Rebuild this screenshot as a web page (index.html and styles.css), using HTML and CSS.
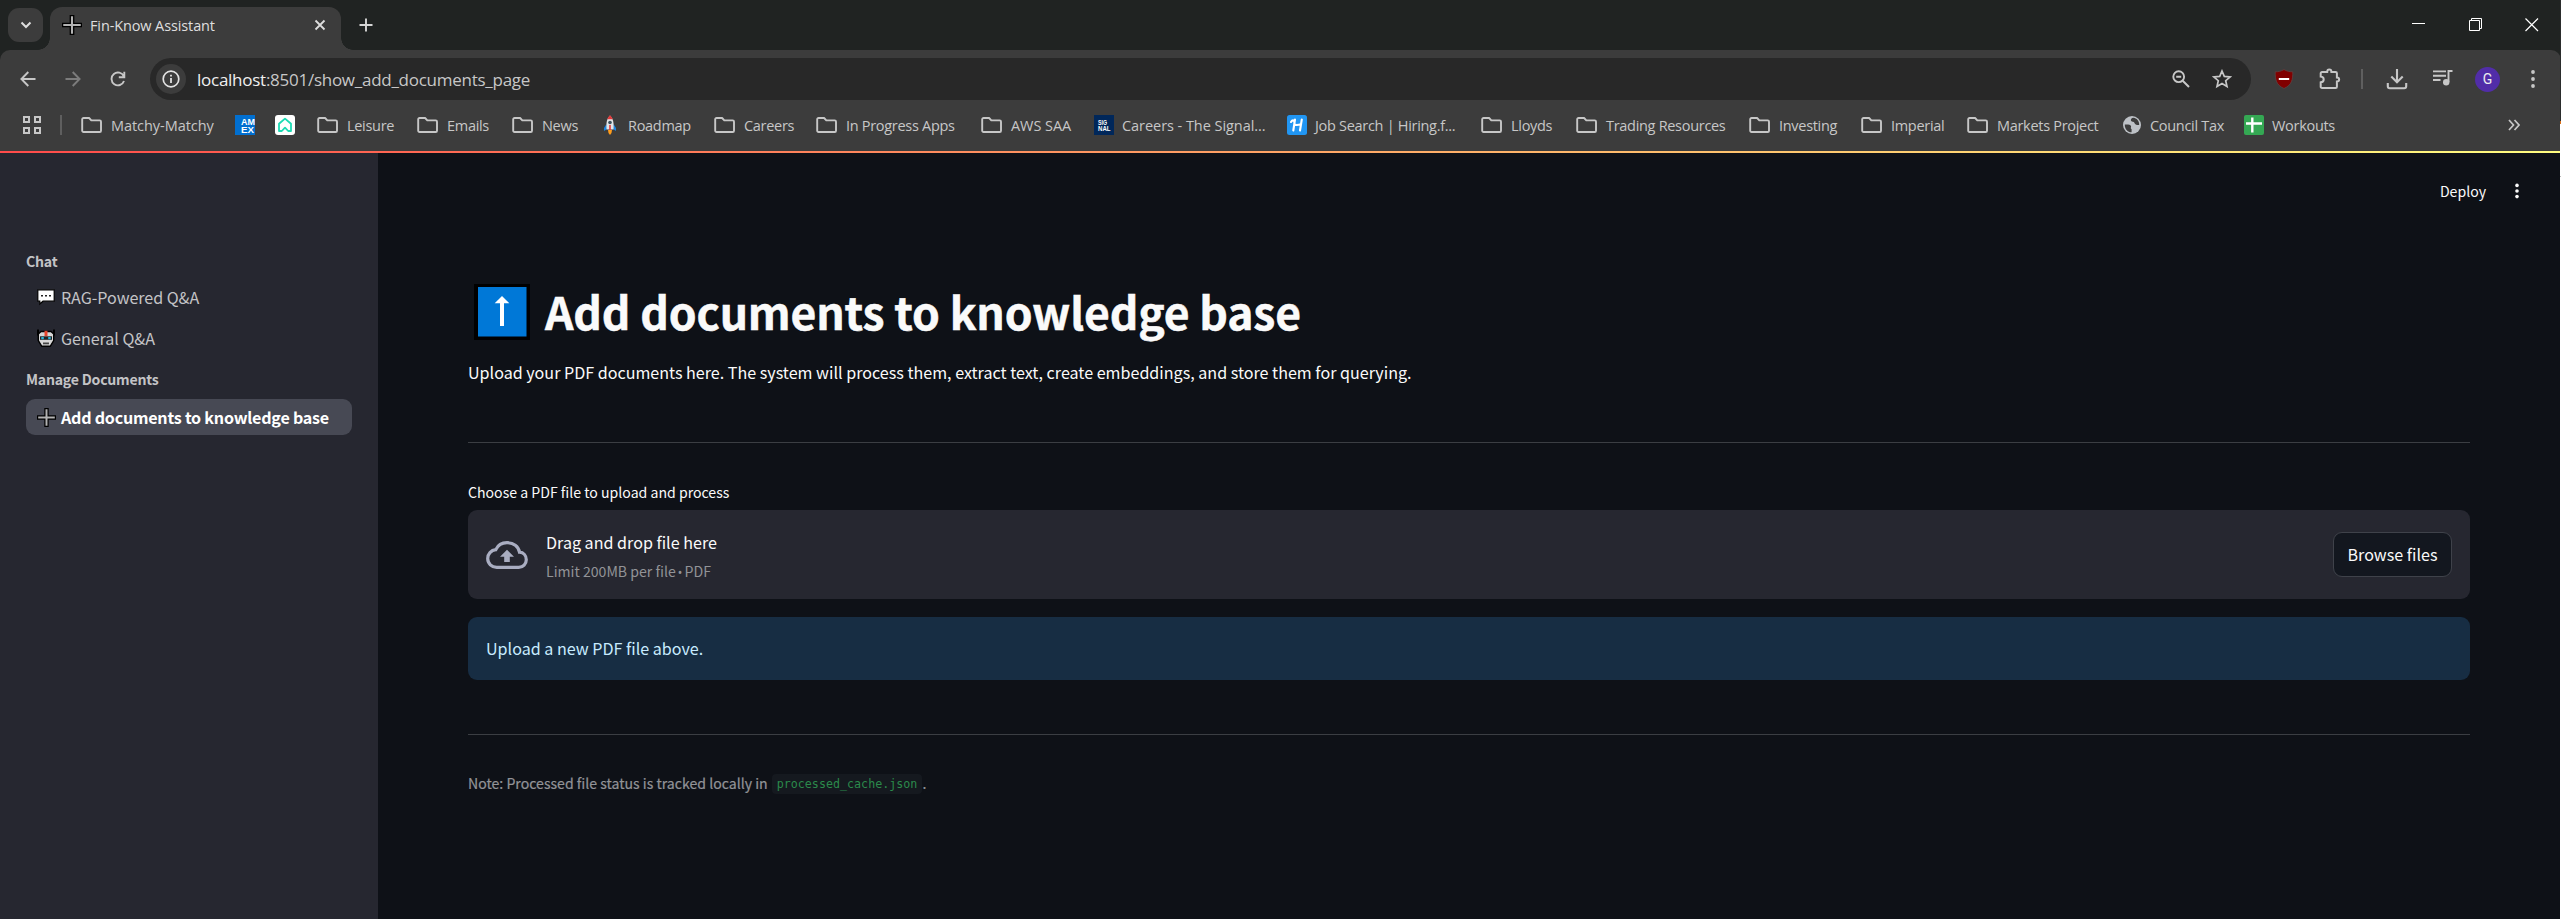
FILE: index.html
```html
<!DOCTYPE html>
<html lang="en">
<head>
<meta charset="utf-8">
<title>Fin-Know Assistant</title>
<link rel="stylesheet" href="styles.css">
</head>
<body>
<svg class="defs" width="0" height="0">
  <symbol id="folder" viewBox="0 0 22 18"><path d="M2.500 2h5.600l2.200 2.400h8.400a1.300 1.300 0 0 1 1.300 1.300v9a1.300 1.300 0 0 1-1.300 1.300H2.500a1.300 1.300 0 0 1-1.300-1.300V3.300A1.300 1.300 0 0 1 2.500 2z" fill="none" stroke="#c7c7c7" stroke-width="1.900" stroke-linejoin="round"/></symbol>
  <symbol id="plus" viewBox="0 0 20 20"><path d="M8.300 .6h3.400v7.700h7.700v3.400h-7.700v7.700H8.300v-7.700H.6V8.300h7.700z" fill="#b3b3b3" stroke="#000" stroke-width="1.300"/></symbol>
</svg>
<header class="browser">
  <div class="tabstrip">
    <button class="tab-search"><svg width="12" height="8" viewBox="0 0 12 8"><path d="M1.500 1.500 6 6l4.500-4.500" fill="none" stroke="#dedede" stroke-width="2"/></svg></button>
    <div class="tab">
      <svg class="favicon" width="20" height="20"><use href="#plus"/></svg>
      <span class="tab-title">Fin-Know Assistant</span>
      <svg class="tab-close" width="12" height="12" viewBox="0 0 12 12"><path d="m1.500 1.500 9 9m0-9-9 9" stroke="#dedede" stroke-width="1.800"/></svg>
    </div>
    <svg class="new-tab" width="14" height="14" viewBox="0 0 14 14"><path d="M7 .5v13M.5 7h13" stroke="#d6d6d6" stroke-width="1.900"/></svg>
    <div class="window-controls">
      <svg width="14" height="14" viewBox="0 0 14 14"><path d="M0 5.500h13" stroke="#fff"/></svg>
      <svg width="14" height="14" viewBox="0 0 14 14"><path d="M.5 2.500h10v10H.5zM2.500 2.500v-2h10v10h-2" fill="none" stroke="#fff"/></svg>
      <svg width="14" height="14" viewBox="0 0 14 14"><path d="m.5.5 12.500 12.500m0-12.500-12.500 12.500" stroke="#fff" stroke-width="1.200"/></svg>
    </div>
  </div>
  <div class="toolbar">
    <div class="nav">
      <svg width="16" height="16" viewBox="0 0 16 16"><path d="M15.500 8H1.500M8.300 1 1.400 8l6.900 7" fill="none" stroke="#c7c7c7" stroke-width="1.900"/></svg>
      <svg width="16" height="16" viewBox="0 0 16 16"><path d="M.5 8h14M7.700 1l6.900 7-6.900 7" fill="none" stroke="#7c7c7c" stroke-width="1.900"/></svg>
      <svg width="16" height="16" viewBox="0 0 16 16"><path d="M13.800 5.300A6.400 6.400 0 1 0 14 10M14.300.8v5.500H8.800" fill="none" stroke="#c7c7c7" stroke-width="1.900"/></svg>
    </div>
    <div class="omnibox">
      <span class="site-info"><svg width="18" height="18" viewBox="0 0 18 18"><circle cx="9" cy="9" r="7.800" fill="none" stroke="#e3e3e3" stroke-width="1.700"/><path d="M9 8v5M9 4.700v1.900" stroke="#e3e3e3" stroke-width="1.800"/></svg></span>
      <span class="url"><b>localhost</b>:8501/show_add_documents_page</span>
      <svg class="zoom-icon" width="18" height="18" viewBox="0 0 18 18"><circle cx="6.700" cy="6.700" r="5.400" fill="none" stroke="#c7c7c7" stroke-width="1.900"/><path d="M4.200 6.700h5M10.700 10.700l6.300 6.300" stroke="#c7c7c7" stroke-width="2"/></svg>
      <svg width="20" height="20" viewBox="0 0 20 20"><path d="m10 2 2.300 5.400 5.800.5-4.400 3.800 1.300 5.700-5-3-5 3 1.300-5.700-4.400-3.800 5.800-.5z" fill="none" stroke="#c7c7c7" stroke-width="1.700"/></svg>
    </div>
    <div class="tools">
      <svg class="shield" width="20" height="20" viewBox="0 0 20 20"><path d="M10 .5c3 1.800 5.500 2.300 8.800 2.300 0 8-.8 13-8.800 16.700C2 15.800 1.200 10.800 1.200 2.800 4.500 2.800 7 2.300 10 .5z" fill="#800000" stroke="#5c4444" stroke-width=".8"/><path d="M4.800 10h10.400" stroke="#fff" stroke-width="2"/></svg>
      <svg class="puzzle" width="22" height="22" viewBox="0 0 22 22"><path d="M3 4h5.200c0-3.200 4.200-3.200 4.200 0h4.200a1.300 1.300 0 0 1 1.300 1.300v4.200c3 0 3 4 0 4v5.200a1.300 1.300 0 0 1-1.300 1.300H3a1.300 1.300 0 0 1-1.300-1.300v-4.400c4-.5 4-5.300 0-5.800V5.300A1.300 1.300 0 0 1 3 4z" fill="none" stroke="#c7c7c7" stroke-width="2"/></svg>
      <i class="divider"></i>
      <svg class="download" width="22" height="22" viewBox="0 0 22 22"><path d="M11 1v12.500M5.300 8.500l5.700 5.700 5.700-5.700M1.800 15v3.200a2 2 0 0 0 2 2h14.400a2 2 0 0 0 2-2V15" fill="none" stroke="#c7c7c7" stroke-width="2.100"/></svg>
      <svg class="media" width="22" height="18" viewBox="0 0 22 18"><path d="M1 2.400h13M1 6.700h13M1 11h7.500M16.500 13V2h4" fill="none" stroke="#c7c7c7" stroke-width="1.900"/><circle cx="14.200" cy="13.200" r="3.200" fill="#c7c7c7"/></svg>
      <span class="avatar">G</span>
      <svg class="menu" width="6" height="20" viewBox="0 0 6 20"><g fill="#c7c7c7"><circle cx="3" cy="3" r="1.900"/><circle cx="3" cy="10" r="1.900"/><circle cx="3" cy="17" r="1.900"/></g></svg>
    </div>
  </div>
  <nav class="bookmarks">
    <svg class="apps" width="20" height="20" viewBox="0 0 20 20"><path d="M2 2h5v5H2zM13 2h5v5h-5zM2 13h5v5H2zM13 13h5v5h-5z" fill="none" stroke="#c7c7c7" stroke-width="2"/></svg>
    <i class="divider"></i>
    <a class="bm folder w154 wide"><svg><use href="#folder"/></svg><span>Matchy-Matchy</span></a>
    <a class="bm w40"><svg viewBox="0 0 20 20"><rect width="20" height="20" fill="#016fd0"/><g class="fav-text"><text x="6" y="9.500" font-size="8.500" textLength="14" lengthAdjust="spacingAndGlyphs">AM</text><text x="6" y="17.500" font-size="8.500" textLength="13" lengthAdjust="spacingAndGlyphs">EX</text></g></svg></a>
    <a class="bm w42"><svg viewBox="0 0 20 20"><rect width="20" height="20" rx="3" fill="#fff"/><path d="M4 16V8.800L10 3.600l6 5.200V16h-2.800L10 12.600 6.800 16z" fill="none" stroke="#1ddbb4" stroke-width="1.800" stroke-linejoin="round"/></svg></a>
    <a class="bm folder w100"><svg><use href="#folder"/></svg><span>Leisure</span></a>
    <a class="bm folder w95"><svg><use href="#folder"/></svg><span>Emails</span></a>
    <a class="bm folder w88"><svg><use href="#folder"/></svg><span>News</span></a>
    <a class="bm w114"><svg viewBox="0 0 20 20"><path d="M6.500 9 4 13v3l3-2zM13.500 9l2.500 4v3l-3-2z" fill="#1c86e0"/><path d="M10 .5C7 3.500 6 7 6.500 14.500h7C14 7 13 3.500 10 .5z" fill="#e2e5e8"/><path d="M10 .2C8.600 1.500 7.800 2.800 7.300 4.300h5.400C12.200 2.800 11.400 1.500 10 .2zM9.200 10h1.600v5H9.200z" fill="#e03a3a"/><circle cx="10" cy="7.500" r="1.800" fill="#3c5360"/><path d="M8 15h4l-.5 3L10 20l-1.500-2z" fill="#ff9d1c"/></svg><span>Roadmap</span></a>
    <a class="bm folder w102"><svg><use href="#folder"/></svg><span>Careers</span></a>
    <a class="bm folder w165"><svg><use href="#folder"/></svg><span>In Progress Apps</span></a>
    <a class="bm folder w113 wide"><svg><use href="#folder"/></svg><span>AWS SAA</span></a>
    <a class="bm w193 wide"><svg viewBox="0 0 20 20"><rect width="20" height="20" fill="#00275a"/><g class="fav-text"><text x="4" y="9.500" font-size="6.500" textLength="9" lengthAdjust="spacingAndGlyphs">SIG</text><text x="4" y="15.500" font-size="6.500" textLength="12.500" lengthAdjust="spacingAndGlyphs">NAL</text></g></svg><span>Careers - The Signal...</span></a>
    <a class="bm w194"><svg viewBox="0 0 20 20"><rect width="20" height="20" rx="2.500" fill="#2196f3"/><path d="M8 4.500 6.300 15.500M14.800 4.500 13 15.500M4 7c1.500-2.500 4-2.500 3.300 2.500 2 .8 4 .6 6.700-.3" fill="none" stroke="#fff" stroke-width="2.100" stroke-linecap="round"/></svg><span>Job Search | Hiring.f...</span></a>
    <a class="bm folder w95"><svg><use href="#folder"/></svg><span>Lloyds</span></a>
    <a class="bm folder w173"><svg><use href="#folder"/></svg><span>Trading Resources</span></a>
    <a class="bm folder w112"><svg><use href="#folder"/></svg><span>Investing</span></a>
    <a class="bm folder w106"><svg><use href="#folder"/></svg><span>Imperial</span></a>
    <a class="bm folder w155"><svg><use href="#folder"/></svg><span>Markets Project</span></a>
    <a class="bm w122"><svg viewBox="0 0 20 20"><circle cx="10" cy="10" r="9" fill="#bdc1c6"/><path d="M2.800 9.500c2.500 0 5-.3 6 1.200s-1 2.300.8 3.300v3.300c-4 0-7-3.300-6.800-7.800zM11.500 2.800c-2 0-3 1.500-2.500 3 .8 1.500 3 .5 3.500 2.200.5 1.800 2.800 2.300 4.700 2C17.500 6 14.500 3 11.500 2.800z" fill="#3c3c3c"/></svg><span>Council Tax</span></a>
    <a class="bm w122"><svg viewBox="0 0 20 20"><rect width="20" height="20" rx="2" fill="#34a853"/><path d="M8.300 2.500v15M2 8.500h16" stroke="#fff" stroke-width="2.400"/></svg><span>Workouts</span></a>
    <svg class="more" width="12" height="12" viewBox="0 0 12 12"><path d="m1 1 4.500 5L1 11M6.500 1 11 6l-4.500 5" fill="none" stroke="#c7c7c7" stroke-width="1.700"/></svg>
  </nav>
</header>
<div class="decoration"></div>
<div class="app">
  <aside class="sidebar">
    <h4>Chat</h4>
    <a class="link"><svg width="18" height="18" viewBox="0 0 18 18"><path d="M.8 1.800h16.400v11.400H6L2.800 16v-2.800h-2z" fill="#fff" stroke="#000" stroke-width="1.200"/><path d="M4 7h2v1.600H4zM8 7h2v1.600H8zM12 7h2v1.600h-2z" fill="#222"/></svg><span>RAG-Powered Q&amp;A</span></a>
    <a class="link second"><svg width="18" height="20" viewBox="0 0 18 20"><path d="M1 1.500v6M17 1.500v6" stroke="#000" stroke-width="2"/><path d="M1.300 6 4 3.500h10L16.700 6v6.500l-3.500 5.800H4.800l-3.500-5.800z" fill="#d6d6d6" stroke="#000" stroke-width="1.400"/><path d="M7.500 2.800h3V8h-3z" fill="#e8452c"/><path d="M3 8.300h12v3.500H3z" fill="#222"/><path d="M4.300 9h2.500v2.200H4.300zM11.200 9h2.500v2.200h-2.500z" fill="#2ab8dc"/><path d="M6 14.500h6v1.800H6z" fill="#444"/></svg><span>General Q&amp;A</span></a>
    <h4 class="manage">Manage Documents</h4>
    <a class="link active"><svg width="19" height="19"><use href="#plus"/></svg><span>Add documents to knowledge base</span></a>
  </aside>
  <main class="main">
    <div class="app-header"><span>Deploy</span><svg width="6" height="16" viewBox="0 0 6 16"><g fill="#fafafa"><circle cx="3" cy="2.400" r="1.800"/><circle cx="3" cy="8" r="1.800"/><circle cx="3" cy="13.600" r="1.800"/></g></svg></div>
    <section class="content">
      <h1><svg width="56" height="56" viewBox="0 0 56 56"><path d="M0 0h56v56H0z"/><path d="M4 3h48.500v49.500H4z" fill="#0078d7"/><path d="M28 42V17" stroke="#fff" stroke-width="4"/><path d="m20.700 19.300 7.300-7.300 7.300 7.300z" fill="#fff"/></svg><span>Add documents to knowledge base</span></h1>
      <p class="lead">Upload your PDF documents here. The system will process them, extract text, create embeddings, and store them for querying.</p>
      <hr>
      <label class="field-label">Choose a PDF file to upload and process</label>
      <div class="uploader">
        <svg width="42" height="28" viewBox="0 0 42 28"><path d="M33.500 11.200C32.500 5.500 27.500 1.700 21 1.700c-5 0-9.200 2.600-11.200 7C5 9.200 1.700 13 1.700 17.500c0 5 4 8.800 9 8.800h22.100c4.300 0 7.500-3.400 7.500-7.500 0-4.100-2.800-7.300-6.800-7.600z" fill="none" stroke="#a9adc1" stroke-width="3.200"/><path d="M18.200 21v-5.200H14L21 8.800l7 7h-4.200V21z" fill="#a9adc1"/></svg>
        <div class="drop-text"><span class="drop-title">Drag and drop file here</span><span class="drop-limit">Limit 200MB per file <i class="bullet">•</i> PDF</span></div>
        <button class="browse"><span>Browse files</span></button>
      </div>
      <div class="info">Upload a new PDF file above.</div>
      <hr class="hr2">
      <p class="note"><span>Note: Processed file status is tracked locally in</span><code>processed_cache.json</code><span>.</span></p>
    </section>
  </main>
</div>
<i class="window-edge"></i>
</body>
</html>
```
FILE: styles.css
```css
* { box-sizing: border-box; }
body {
  position: relative;
  margin: 0;
  height: 919px;
  display: flex;
  flex-direction: column;
  overflow: hidden;
  background: #0e1117;
  color: #fafafa;
  font-family: "Noto Sans CJK SC", "Noto Sans", sans-serif;
}
.defs { position: absolute; }
svg { display: block; flex: none; }
span { white-space: nowrap; }
button { border: 0; padding: 0; color: inherit; font: inherit; }
h1, h4, p { margin: 0; }

/* Browser chrome */
.browser { background: #202322; font-family: "Open Sans", sans-serif; color: #c7c7c7; }
.tabstrip { display: flex; height: 50px; padding-left: 8px; }
.tab-search {
  width: 35px; height: 34px; margin-top: 8px; border-radius: 11px;
  display: grid; place-items: center; background: #3c3c3c;
}
.tab {
  position: relative; width: 291px; height: 43px; margin: 7px 0 0 7px; padding: 0 15px 7px 12px;
  display: flex; align-items: center; border-radius: 12px 12px 0 0; background: #3c3c3c;
}
.tab::before, .tab::after {
  content: ""; position: absolute; bottom: 0; width: 12px; height: 12px;
}
.tab::before { left: -12px; background: radial-gradient(circle at 0 0, transparent 11.5px, #3c3c3c 12px); }
.tab::after { right: -12px; background: radial-gradient(circle at 100% 0, transparent 11.5px, #3c3c3c 12px); }
.tab-title { margin-left: 8px; font-size: 14.5px; letter-spacing: -.12px; color: #dfdfdf; }
.tab-close { margin-left: auto; }
.new-tab { margin: 18px 0 0 18px; }
.window-controls { display: flex; gap: 42.5px; margin: 18px 22px 0 auto; }
.toolbar {
  display: flex; align-items: center; height: 58px; padding: 0 25px 0 20px;
  background: #3c3c3c; border-radius: 10px 10px 0 0;
}
.nav { display: flex; gap: 29px; }
.omnibox {
  flex: 1; display: flex; align-items: center; height: 42px; margin: 0 23px 0 24px;
  padding: 0 19px 0 6px; border-radius: 21px; background: #282828;
}
.site-info { width: 30px; height: 30px; border-radius: 50%; display: grid; place-items: center; background: #3c3c3c; }
.url { margin-left: 11px; font-size: 17px; letter-spacing: -.26px; color: #c7c7c7; }
.url b { font-weight: 400; color: #f0f0f0; }
.zoom-icon { margin: 0 22px 0 auto; }
.tools { display: flex; align-items: center; }
.divider { width: 2px; height: 20px; background: #5f5f5f; }
.puzzle { margin: 0 20px 0 25px; }
.download { margin-left: 23px; }
.media { margin: 0 21px 2px 24px; }
.avatar {
  width: 25px; height: 25px; border-radius: 50%; display: grid; place-items: center;
  background: #512da8; color: #eee; font: 14px/1 Roboto, sans-serif;
}
.menu { margin-left: 30px; }
.bookmarks { display: flex; align-items: center; height: 43px; padding: 0 41px 9px 22px; background: #3c3c3c; }
.bookmarks .divider { margin: 0 19px 0 18px; }
.bm { display: flex; align-items: center; gap: 8px; flex: none; font-size: 14.5px; letter-spacing: -.3px; }
.bm.wide { letter-spacing: -.05px; }
.bm svg { width: 20px; height: 20px; }
.bm.folder svg { width: 22px; height: 18px; }
.fav-text { fill: #fff; font-family: "Liberation Sans", sans-serif; font-weight: 700; letter-spacing: 0; }
.w40 { width: 40px; } .w42 { width: 42px; } .w88 { width: 88px; } .w95 { width: 95px; }
.w100 { width: 100px; } .w102 { width: 102px; } .w106 { width: 106px; } .w112 { width: 112px; }
.w113 { width: 113px; } .w114 { width: 114px; } .w122 { width: 122px; } .w154 { width: 154px; }
.w155 { width: 155px; } .w165 { width: 165px; } .w173 { width: 173px; } .w193 { width: 193px; }
.w194 { width: 194px; }
.more { margin-left: auto; }
.decoration { height: 2px; background: linear-gradient(90deg, #ff4b4b, #fffd80); }

/* App */
.app { display: flex; flex: 1; }
.sidebar { width: 378px; padding: 97px 26px 0; background: #262730; color: #c3c3c6; }
.sidebar h4 { height: 22px; line-height: 22px; font-size: 14.1px; font-weight: 700; letter-spacing: -.22px; }
.link { display: flex; align-items: center; gap: 6px; height: 36px; margin-top: 7px; padding-left: 11px; border-radius: 9px; font-size: 16.1px; letter-spacing: -.04px; }
.link span { padding-bottom: 1px; }
.link.second { margin-top: 5px; }
.manage { margin-top: 12px; }
.link.active { margin-top: 9px; background: #474954; color: #fff; font-weight: 700; gap: 5px; letter-spacing: -.24px; }
.main { flex: 1; }
.app-header { display: flex; align-items: center; justify-content: flex-end; gap: 28px; height: 76px; padding-right: 41px; font-size: 14.1px; }
.app-header span { padding-bottom: 1px; }
.content { padding: 0 91px 0 90px; }
h1 { display: flex; align-items: center; gap: 15px; height: 60px; margin-top: 53px; padding-left: 6px; font-size: 44.5px; line-height: 60px; font-weight: 700; letter-spacing: -.18px; -webkit-text-stroke: .5px #fafafa; }
h1 svg { -webkit-text-stroke: 0; }
h1 span { padding-bottom: 3px; }
.lead { height: 28px; margin-top: 16px; font-size: 16.1px; line-height: 28px; }
hr { height: 1px; margin: 56px 0 0; border: 0; background: #3b3e43; }
.field-label { display: block; height: 22px; margin-top: 38px; font-size: 14.1px; line-height: 22px; }
.uploader { display: flex; align-items: center; height: 89px; margin-top: 7px; padding: 0 18px; border-radius: 9px; background: #262730; }
.drop-text { display: flex; flex-direction: column; gap: 4px; margin-left: 18px; padding-top: 2px; }
.drop-title { font-size: 16.1px; line-height: 27px; }
.drop-limit { font-size: 14.1px; line-height: 23px; color: #929397; }
.bullet { font: 12px/1 "Noto Sans", sans-serif; margin: 0 -1px; }
.browse { width: 119px; height: 45px; margin-left: auto; padding-bottom: 2px; border: 1px solid #3f424a; border-radius: 9px; background: #13171f; font-size: 16.1px; }
.info { display: flex; align-items: center; height: 63px; margin-top: 18px; padding: 0 0 1px 18px; border-radius: 9px; background: #172d43; color: #c7ebff; font-size: 16.1px; }
.hr2 { margin-top: 54px; }
.note { display: flex; align-items: center; height: 24px; margin-top: 36px; font-size: 14.1px; color: #929397; -webkit-text-stroke: .2px; }
.note code { margin: 2px 0 0 4px; padding: 0 5px; height: 20px; border-radius: 4px; background: #15191f; color: #2b8a4b; font: 11.7px/20px "DejaVu Sans Mono", monospace; -webkit-text-stroke: 0; }

/* Sliver of the window behind, along the right edge */
.window-edge {
  position: absolute; top: 0; right: 0; width: 1px; height: 919px;
  background: linear-gradient(#2b2d2d 0 121px, #d9711c 121px 124px, #fff 124px 176px, #bbb 176px 177px, #fff 177px);
}
```
